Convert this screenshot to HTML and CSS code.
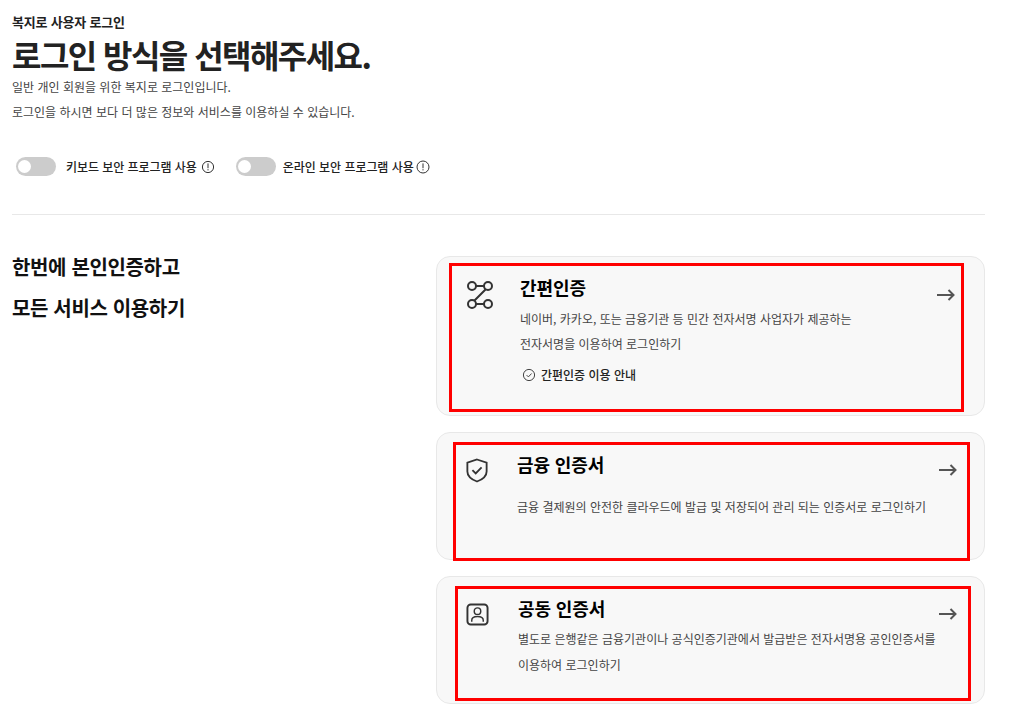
FILE: index.html
```html
<!DOCTYPE html>
<html lang="ko">
<head>
  <meta charset="UTF-8">
  <title>복지로 사용자 로그인</title>
  <link rel="stylesheet" href="styles.css">
</head>
<body>
  <div id="wrap">
    <p class="eyebrow">복지로 사용자 로그인</p>
    <h1>로그인 방식을 선택해주세요.</h1>
    <p class="lead">일반 개인 회원을 위한 복지로 로그인입니다.</p>
    <p class="lead">로그인을 하시면 보다 더 많은 정보와 서비스를 이용하실 수 있습니다.</p>

    <div class="toggles">
      <div class="toggle-item">
        <span class="switch"></span>
        <span class="toggle-label">키보드 보안 프로그램 사용</span>
        <svg class="info" width="14" height="14" viewBox="0 0 14 14"><circle cx="7" cy="7" r="5.6"/><path d="M7 3.400v4.800M7 9.200v1.200"/></svg>
      </div>
      <div class="toggle-item second">
        <span class="switch"></span>
        <span class="toggle-label">온라인 보안 프로그램 사용</span>
        <svg class="info" width="14" height="14" viewBox="0 0 14 14"><circle cx="7" cy="7" r="6"/><path d="M7 3.400v4.800M7 9.200v1.200"/></svg>
      </div>
    </div>

    <div class="login-area">
      <div class="slogan">
        <p>한번에 본인인증하고</p>
        <p>모든 서비스 이용하기</p>
      </div>

      <div class="cards">
        <div class="card card-simple">
          <span class="mark mark-simple"></span>
          <svg class="card-icon" width="26" height="28" viewBox="0 0 26 28"><circle cx="5" cy="5" r="4"/><circle cx="21" cy="5" r="4"/><circle cx="5" cy="23" r="4"/><circle cx="21" cy="23" r="4"/><path d="M9 5h8M18.500 8.500 7.500 19.500M9 23h8"/></svg>
          <div class="card-body">
            <h2>간편인증</h2>
            <p>네이버, 카카오, 또는 금융기관 등 민간 전자서명 사업자가 제공하는</p>
            <p class="tight">전자서명을 이용하여 로그인하기</p>
            <div class="guide">
              <svg width="14" height="14" viewBox="0 0 14 14"><circle cx="7" cy="7" r="5.600"/><path d="m4.600 7.100 1.800 1.800 3.200-3.400"/></svg>
              <span>간편인증 이용 안내</span>
            </div>
          </div>
          <svg class="arrow" width="18" height="12" viewBox="0 0 18 12"><path d="M0 6h16.500M11.500 1l5 5-5 5"/></svg>
        </div>

        <div class="card card-finance">
          <span class="mark mark-finance"></span>
          <svg class="card-icon" width="24" height="27" viewBox="0 0 24 27"><path d="M12 1.500 22.500 5v9.500c0 5-4 8.500-10.500 11C5.500 23 1.500 19.500 1.500 14.500V5z"/><path d="m7 13 3.600 3.600 6.400-6.400"/></svg>
          <div class="card-body">
            <h2>금융 인증서</h2>
            <p class="spaced">금융 결제원의 안전한 클라우드에 발급 및 저장되어 관리 되는 인증서로 로그인하기</p>
          </div>
          <svg class="arrow" width="18" height="12" viewBox="0 0 18 12"><path d="M0 6h16.500M11.500 1l5 5-5 5"/></svg>
        </div>

        <div class="card card-joint">
          <span class="mark mark-joint"></span>
          <svg class="card-icon" width="24" height="24" viewBox="0 0 24 24"><rect x="1.500" y="1.500" width="21" height="21" rx="3.500"/><circle class="thin" cx="12" cy="8.500" r="3.400"/><path class="thin" d="M6 19.500v-1.500c0-2.500 2.500-4 6-4s6 1.500 6 4v1.500"/></svg>
          <div class="card-body">
            <h2>공동 인증서</h2>
            <p>별도로 은행같은 금융기관이나 공식인증기관에서 발급받은 전자서명용 공인인증서를</p>
            <p>이용하여 로그인하기</p>
          </div>
          <svg class="arrow" width="18" height="12" viewBox="0 0 18 12"><path d="M0 6h16.500M11.500 1l5 5-5 5"/></svg>
        </div>
      </div>
    </div>
  </div>
</body>
</html>
```

FILE: styles.css
```css
* {
  box-sizing: border-box;
}

body {
  margin: 0;
  background-color: #fff;
  color: #222;
  font-family: "Noto Sans CJK KR", "Noto Sans", sans-serif;
}

p,
h1,
h2 {
  margin: 0;
}

#wrap {
  width: 973px;
  margin-left: 12px;
  padding-top: 12px;
}

.eyebrow {
  font-size: 13px;
  line-height: 20px;
  font-weight: 700;
  letter-spacing: -0.2px;
}

h1 {
  margin-top: 2px;
  font-size: 32px;
  line-height: 40px;
  font-weight: 700;
  letter-spacing: -1.550px;
}

.lead {
  font-size: 12px;
  line-height: 26px;
  color: #444;
}

.lead + .lead {
  margin-top: -1px;
}

/* toggles */
.toggles {
  display: flex;
  gap: 21px;
  margin-top: 31px;
  padding: 0 4px 38px;
  border-bottom: 1px solid #e8e8e8;
}

.toggle-item {
  display: flex;
  align-items: center;
  height: 20px;
}

.switch {
  position: relative;
  width: 40px;
  height: 19px;
  margin-right: 10px;
  border-radius: 10px;
  background-color: #ccc;
}

.second .switch {
  margin-right: 7px;
}

.switch::before {
  content: "";
  position: absolute;
  left: 2px;
  top: 3px;
  width: 13px;
  height: 13px;
  border-radius: 50%;
  background-color: #fff;
}

.toggle-label {
  font-size: 12px;
  font-weight: 500;
  letter-spacing: -0.05px;
  color: #222;
}

.info {
  margin-left: 4px;
  margin-top: 2px;
  fill: none;
  stroke: #333;
  stroke-width: 1;
}

.second .info {
  margin-left: 2px;
}

/* lower part */
.login-area {
  display: flex;
  justify-content: space-between;
  margin-top: 41px;
}

.slogan {
  font-size: 20px;
  line-height: 41px;
  font-weight: 700;
  letter-spacing: -0.35px;
  color: #111;
  margin-top: -10px;
}

.cards {
  display: flex;
  flex-direction: column;
  gap: 16px;
  width: 549px;
}

.card {
  position: relative;
  display: flex;
  border: 1px solid #e8e8e8;
  border-radius: 14px;
  background-color: #f8f8f8;
}

.card-simple {
  height: 160px;
  padding: 20px 30px 0 30px;
}

.card-finance {
  height: 128px;
  padding: 20px 27px 0 29px;
}

.card-joint {
  height: 128px;
  padding: 20px 27px 0 29px;
}

.card-icon {
  flex: none;
  fill: none;
  stroke: #333;
  stroke-width: 2;
}

.card-icon .thin {
  stroke-width: 1.500;
}

.card-simple .card-icon {
  margin-top: 4px;
}

.card-finance .card-icon {
  margin-top: 5px;
  width: 22px;
  height: 25px;
}

.card-joint .card-icon {
  margin-top: 6px;
  width: 23px;
  height: 23px;
}

.card-body {
  flex: 1;
}

.card-simple .card-body {
  margin-left: 27px;
}

.card-finance .card-body {
  margin-left: 29px;
}

.card-joint .card-body {
  margin-left: 29px;
}

.card h2 {
  font-size: 18px;
  line-height: 24px;
  font-weight: 700;
  letter-spacing: -0.1px;
  color: #000;
  margin-top: -1px;
  margin-bottom: 6px;
}

.card-simple h2 {
  margin-top: -2px;
  margin-bottom: 7px;
}

.card-body p {
  font-size: 12px;
  line-height: 26px;
  color: #444;
}

.card-body .tight {
  margin-top: -1px;
}

.card-body .spaced {
  margin-top: 18px;
}

.guide {
  display: flex;
  align-items: center;
  gap: 5px;
  margin-top: 6px;
  margin-left: 2px;
  font-size: 12px;
  font-weight: 500;
  line-height: 24px;
  color: #222;
}

.guide svg {
  fill: none;
  stroke: #444;
  stroke-width: 1;
}

.arrow {
  flex: none;
  margin-top: 12px;
  fill: none;
  stroke: #555;
  stroke-width: 2;
}

.card-simple .arrow {
  margin-right: -1px;
}

.card-finance .arrow {
  margin-top: 11px;
}

.card-joint .arrow {
  margin-top: 11px;
}

/* red highlight boxes */
.mark {
  position: absolute;
  border: 3px solid #f00;
  pointer-events: none;
}

.mark-simple {
  left: 12px;
  top: 6px;
  width: 515px;
  height: 149px;
}

.mark-finance {
  left: 16px;
  top: 9px;
  width: 517px;
  height: 119px;
}

.mark-joint {
  left: 18px;
  top: 9px;
  width: 516px;
  height: 115px;
}
```
